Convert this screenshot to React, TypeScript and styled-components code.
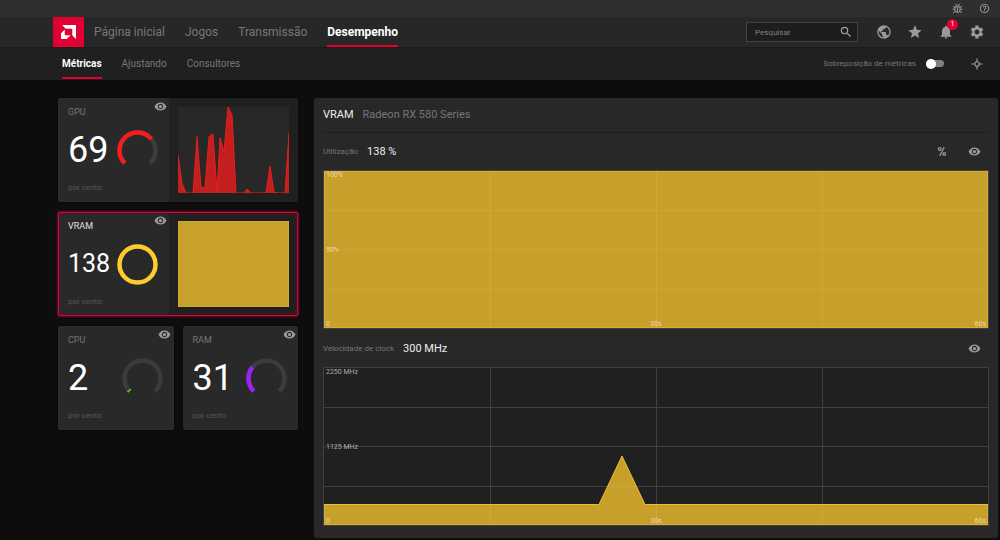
import React from "react";
import styled, { createGlobalStyle } from "styled-components";
import {
  MdHelpOutline,
  MdNotifications,
  MdPublic,
  MdSearch,
  MdSettings,
  MdStar,
  MdVisibility,
} from "react-icons/md";

const GlobalStyle = createGlobalStyle`
  *, *::before, *::after { box-sizing: border-box; }
  body {
    margin: 0;
    background: #0d0d0d;
    color: #f2f2f2;
    font-family: Roboto, "Liberation Sans", sans-serif;
    font-size: 8px;
  }
  button, input { font: inherit; color: inherit; }
  h1, h2, p { margin: 0; font-weight: 400; }
`;

const Page = styled.div`
  min-height: 100vh;
  background: #0d0d0d;
`;

const TitleBar = styled.div`
  display: flex;
  justify-content: flex-end;
  align-items: center;
  gap: 15px;
  height: 17px;
  padding-right: 10px;
  background: #2f2f2f;
`;

const IconButton = styled.button<{ $size?: number }>`
  position: relative;
  display: inline-flex;
  align-items: center;
  justify-content: center;
  flex: none;
  width: ${(p) => p.$size ?? 16}px;
  height: ${(p) => p.$size ?? 16}px;
  padding: 0;
  border: 0;
  background: none;
  color: #9a9a9a;
  cursor: pointer;
`;

const NavBar = styled.header`
  display: flex;
  align-items: stretch;
  height: 31px;
  padding: 0 15px 0 53px;
  background: #272727;
  border-bottom: 1px solid #1b1b1b;
`;

const Logo = styled.a`
  display: flex;
  align-items: center;
  justify-content: center;
  width: 31px;
  margin-right: 10px;
  background: #e00031;
`;

const Links = styled.nav`
  display: flex;
  gap: 20px;
  flex: 1;
`;

const NavLink = styled.a<{ $active?: boolean; $small?: boolean }>`
  display: flex;
  align-items: center;
  font-size: ${(p) => (p.$small ? 10 : 12)}px;
  font-weight: ${(p) => (p.$active ? 700 : 400)};
  color: ${(p) => (p.$active ? "#ffffff" : "#777777")};
  text-decoration: none;
  white-space: nowrap;
  box-shadow: ${(p) => (p.$active ? "inset 0 -2px #e00031" : "none")};
`;

const Tools = styled.div`
  display: flex;
  align-items: center;
  gap: 15px;
`;

const SearchBox = styled.label`
  display: flex;
  align-items: center;
  width: 112px;
  height: 20px;
  margin-right: 3px;
  padding: 0 4px 0 8px;
  border: 1px solid #414141;
  background: #1d1d1d;
  color: #a0a0a0;
`;

const SearchInput = styled.input`
  flex: 1;
  min-width: 0;
  padding: 0;
  border: 0;
  outline: 0;
  background: none;
  &::placeholder { color: #808080; opacity: 1; }
`;

const Badge = styled.span`
  position: absolute;
  top: -5px;
  right: -4px;
  width: 11px;
  height: 11px;
  border-radius: 50%;
  background: #e00031;
  color: #fff;
  font-size: 7px;
  line-height: 11px;
  text-align: center;
`;

const SubBar = styled.div`
  display: flex;
  align-items: stretch;
  height: 32px;
  padding: 0 15px 1px 62px;
  background: #202020;
`;

const ToggleLabel = styled.label`
  display: flex;
  align-items: center;
  gap: 10px;
  margin-right: 10px;
  color: #777777;
`;

const Toggle = styled.input`
  appearance: none;
  display: flex;
  align-items: center;
  width: 18px;
  height: 7px;
  margin: 0;
  border-radius: 4px;
  background: #808080;
  &::before {
    content: "";
    width: 10px;
    height: 10px;
    flex: none;
    border-radius: 50%;
    background: #ffffff;
  }
`;

const Main = styled.main`
  display: flex;
  align-items: flex-start;
  gap: 16px;
  padding: 18px 2px 2px 58px;
`;

const Tiles = styled.section`
  display: grid;
  grid-template-columns: 1fr 1fr;
  gap: 10px 9px;
  flex: none;
  width: 240px;
`;

const Tile = styled.article<{ $wide?: boolean; $selected?: boolean }>`
  display: flex;
  grid-column: ${(p) => (p.$wide ? "span 2" : "auto")};
  height: 104px;
  border-radius: 2px;
  overflow: hidden;
  background: #202020;
  outline: ${(p) => (p.$selected ? "1px solid #e00031" : "none")};
  outline-offset: -1px;
  box-shadow: ${(p) => (p.$selected ? "0 0 2px 1px #80002a" : "0 0 2px #000000")};
`;

const Summary = styled.div<{ $wide?: boolean }>`
  display: grid;
  grid-template-rows: 29px 1fr 29px;
  flex: ${(p) => (p.$wide ? "0 0 111px" : "1")};
  padding-left: 10px;
  background: #292929;
`;

const SummaryTop = styled.div`
  display: flex;
  justify-content: space-between;
  padding-right: 1px;
`;

const TileName = styled.h2<{ $selected?: boolean }>`
  padding-top: 8px;
  font-size: 9px;
  line-height: 12px;
  color: ${(p) => (p.$selected ? "#e0e0e0" : "#777777")};
`;

const Reading = styled.div`
  display: flex;
  align-items: center;
  justify-content: space-between;
  padding-right: 11px;
`;

const Value = styled.span<{ $long?: boolean }>`
  width: 40px;
  font-size: ${(p) => (p.$long ? 25 : 36)}px;
  line-height: 42px;
  color: #ffffff;
`;

const Unit = styled.p`
  padding-top: 9px;
  line-height: 12px;
  color: #585858;
`;

const TileChart = styled.div`
  flex: 1;
  padding: 9px;
`;

const Plot = styled.svg`
  display: block;
  width: 100%;
  height: 100%;
  background: #282828;
`;

const Panel = styled.section`
  flex: 1;
  min-width: 0;
  padding: 0 9px 12px;
  border-radius: 3px;
  background: #282828;
`;

const PanelTitle = styled.header`
  display: flex;
  align-items: center;
  gap: 9px;
  height: 35px;
  padding-bottom: 2px;
  border-bottom: 1px solid #1e1e1e;
`;

const PanelName = styled.h1`
  font-size: 11px;
  color: #eeeeee;
`;

const Device = styled.p`
  font-size: 11px;
  color: #777777;
`;

const ChartHead = styled.div<{ $height: number }>`
  display: flex;
  align-items: center;
  gap: 9px;
  height: ${(p) => p.$height}px;
  padding-right: 7px;
`;

const ChartLabel = styled.span`
  color: #777777;
`;

const ChartValue = styled.span`
  flex: 1;
  font-size: 11px;
  color: #eeeeee;
`;

const HeadTools = styled.div`
  display: flex;
  gap: 16px;
`;

const ChartFrame = styled.div`
  position: relative;
  height: 159px;
  border: 1px solid #404040;
`;

const LargePlot = styled(Plot)`
  background: #202020;
`;

const ChartMark = styled.span<{ $at: "top" | "middle" | "left" | "center" | "right" }>`
  position: absolute;
  font-size: 7px;
  line-height: 8px;
  color: rgba(255, 255, 255, 0.62);
  ${(p) => p.$at === "top" && "top: 0; left: 2px;"}
  ${(p) => p.$at === "middle" && "top: 50%; left: 2px; margin-top: -4px;"}
  ${(p) => p.$at === "left" && "bottom: 0; left: 2px;"}
  ${(p) => p.$at === "center" && "bottom: 0; left: 50%; width: 20px; margin-left: -10px; text-align: center;"}
  ${(p) => p.$at === "right" && "bottom: 0; right: 2px;"}
`;

function BugIcon() {
  return (
    <svg width="11" height="11" viewBox="0 0 22 22" fill="none" stroke="currentColor" strokeWidth="2" aria-hidden="true">
      <path d="M6 8h10v6a5 5 0 0 1-10 0zM7.500 8a3.500 3.500 0 0 1 7 0M6.500 1.500 9 5M15.500 1.500 13 5M1 12.500H6M16 12.500h5M2 6.500 6 9M20 6.500 16 9M2 20l4.500-4M20 20l-4.500-4M11 9v9" />
    </svg>
  );
}

function TargetIcon() {
  return (
    <svg width="12" height="12" viewBox="0 0 24 24" fill="none" stroke="currentColor" strokeWidth="2.400" aria-hidden="true">
      <circle cx="12" cy="12" r="4.500" />
      <path d="M12 1v6.500M12 16.500V23M1 12h6.500M16.500 12H23" />
    </svg>
  );
}

function PercentIcon() {
  return (
    <svg width="10" height="11" viewBox="0 0 20 22" fill="none" stroke="currentColor" strokeWidth="2.400" aria-hidden="true">
      <circle cx="5.500" cy="6" r="2.800" />
      <circle cx="14.500" cy="16" r="2.800" />
      <path d="M14.500 2 5.500 20" />
    </svg>
  );
}

/* The dial runs clockwise over 270 degrees, starting at the lower left. */
function Gauge({ value, color }: { value: number; color: string }) {
  const full = value > 100;
  return (
    <svg width="41" height="41" viewBox="0 0 41 41" fill="none" strokeWidth="4.500" aria-hidden="true">
      {full ? (
        <circle cx="20.500" cy="20.500" r="18" stroke={color} />
      ) : (
        <g transform="rotate(135 20.500 20.500)">
          <circle cx="20.500" cy="20.500" r="18" stroke="#3c3c3c" pathLength={360} strokeDasharray="270 90" />
          <circle cx="20.500" cy="20.500" r="18" stroke={color} pathLength={360} strokeDasharray={`${value * 2.7} 360`} />
        </g>
      )}
    </svg>
  );
}

function EyeButton({ name }: { name: string }) {
  return (
    <IconButton type="button" aria-label={`Mostrar ${name}`}>
      <MdVisibility size={13} />
    </IconButton>
  );
}

type MetricProps = {
  name: string;
  value: number;
  color: string;
  selected?: boolean;
  children?: React.ReactNode;
};

function Metric({ name, value, color, selected, children }: MetricProps) {
  const wide = Boolean(children);
  return (
    <Tile $wide={wide} $selected={selected}>
      <Summary $wide={wide}>
        <SummaryTop>
          <TileName $selected={selected}>{name}</TileName>
          <EyeButton name={name} />
        </SummaryTop>
        <Reading>
          <Value $long={value > 99}>{value}</Value>
          <Gauge value={value} color={color} />
        </Reading>
        <Unit>por cento</Unit>
      </Summary>
      {children && <TileChart>{children}</TileChart>}
    </Tile>
  );
}

const gpuLine =
  "M0 49 4 77 8 87H15L19 30 23 81 27 82 31 30 35 27 39 86 42 31 46 45 50 0 54 8 58 87H66L69 83 73 87H88L92 60 96 86 100 87H107L111 26";

function LargeChart({ line, top, middle }: { line: string; top: string; middle: string }) {
  return (
    <ChartFrame>
      <LargePlot viewBox="0 0 664 157" preserveAspectRatio="none" aria-hidden="true">
        <path d="M166.500 0V157M332.500 0V157M498.500 0V157M0 39.500H664M0 78.500H664M0 118.500H664" stroke="#404040" />
        <path d={line} fill="#ffcb2f" fillOpacity="0.75" stroke="#efbd2f" vectorEffect="non-scaling-stroke" />
      </LargePlot>
      <ChartMark $at="top">{top}</ChartMark>
      <ChartMark $at="middle">{middle}</ChartMark>
      <ChartMark $at="left">0</ChartMark>
      <ChartMark $at="center">30s</ChartMark>
      <ChartMark $at="right">60s</ChartMark>
    </ChartFrame>
  );
}

export default function App() {
  return (
    <Page>
      <GlobalStyle />
      <TitleBar>
        <IconButton type="button" $size={12} aria-label="Relatar problema"><BugIcon /></IconButton>
        <IconButton type="button" $size={12} aria-label="Ajuda"><MdHelpOutline size={11} /></IconButton>
      </TitleBar>
      <NavBar>
        <Logo href="#" aria-label="AMD">
          <svg width="15" height="14" viewBox="0 0 44 41" fill="#fff" aria-hidden="true">
            <path d="M3 0H44V41L33 30V11H14ZM0 24 11 13V30H28L17 41H0Z" />
          </svg>
        </Logo>
        <Links aria-label="Principal">
          <NavLink href="#">Página inicial</NavLink>
          <NavLink href="#">Jogos</NavLink>
          <NavLink href="#">Transmissão</NavLink>
          <NavLink href="#" $active>Desempenho</NavLink>
        </Links>
        <Tools>
          <SearchBox>
            <SearchInput type="text" placeholder="Pesquisar" aria-label="Pesquisar" />
            <MdSearch size={14} />
          </SearchBox>
          <IconButton type="button" aria-label="Navegador"><MdPublic size={16} /></IconButton>
          <IconButton type="button" aria-label="Favoritos"><MdStar size={16} /></IconButton>
          <IconButton type="button" aria-label="Notificações">
            <MdNotifications size={16} />
            <Badge>1</Badge>
          </IconButton>
          <IconButton type="button" aria-label="Configurações"><MdSettings size={16} /></IconButton>
        </Tools>
      </NavBar>
      <SubBar>
        <Links aria-label="Desempenho">
          <NavLink href="#" $small $active>Métricas</NavLink>
          <NavLink href="#" $small>Ajustando</NavLink>
          <NavLink href="#" $small>Consultores</NavLink>
        </Links>
        <Tools>
          <ToggleLabel>
            Sobreposição de métricas
            <Toggle type="checkbox" role="switch" />
          </ToggleLabel>
          <IconButton type="button" aria-label="Centralizar"><TargetIcon /></IconButton>
        </Tools>
      </SubBar>
      <Main>
        <Tiles>
          <Metric name="GPU" value={69} color="#f51c1c">
            <Plot viewBox="0 0 111 87" preserveAspectRatio="none" aria-hidden="true">
              <path d={`${gpuLine}V87H0Z`} fill="#c41f1f" />
              <path d={gpuLine} fill="none" stroke="#ee1c1c" />
            </Plot>
          </Metric>
          <Metric name="VRAM" value={138} color="#ffcb2f" selected>
            <Plot viewBox="0 0 111 87" preserveAspectRatio="none" aria-hidden="true">
              <path d="M0 0H111V87H0Z" fill="#c8a22d" stroke="#dfb02e" />
            </Plot>
          </Metric>
          <Metric name="CPU" value={2} color="#52c41e" />
          <Metric name="RAM" value={31} color="#9b22f2" />
        </Tiles>
        <Panel>
          <PanelTitle>
            <PanelName>VRAM</PanelName>
            <Device>Radeon RX 580 Series</Device>
          </PanelTitle>
          <ChartHead $height={37}>
            <ChartLabel>Utilização</ChartLabel>
            <ChartValue>138 %</ChartValue>
            <HeadTools>
              <IconButton type="button" aria-label="Alternar unidade"><PercentIcon /></IconButton>
              <EyeButton name="utilização" />
            </HeadTools>
          </ChartHead>
          <LargeChart line="M0 0H664V157H0Z" top="100%" middle="50%" />
          <ChartHead $height={38}>
            <ChartLabel>Velocidade de clock</ChartLabel>
            <ChartValue>300 MHz</ChartValue>
            <HeadTools>
              <EyeButton name="velocidade de clock" />
            </HeadTools>
          </ChartHead>
          <LargeChart line="M0 136.500H275L298 88 321 136.500H664V157H0Z" top="2250 MHz" middle="1125 MHz" />
        </Panel>
      </Main>
    </Page>
  );
}
